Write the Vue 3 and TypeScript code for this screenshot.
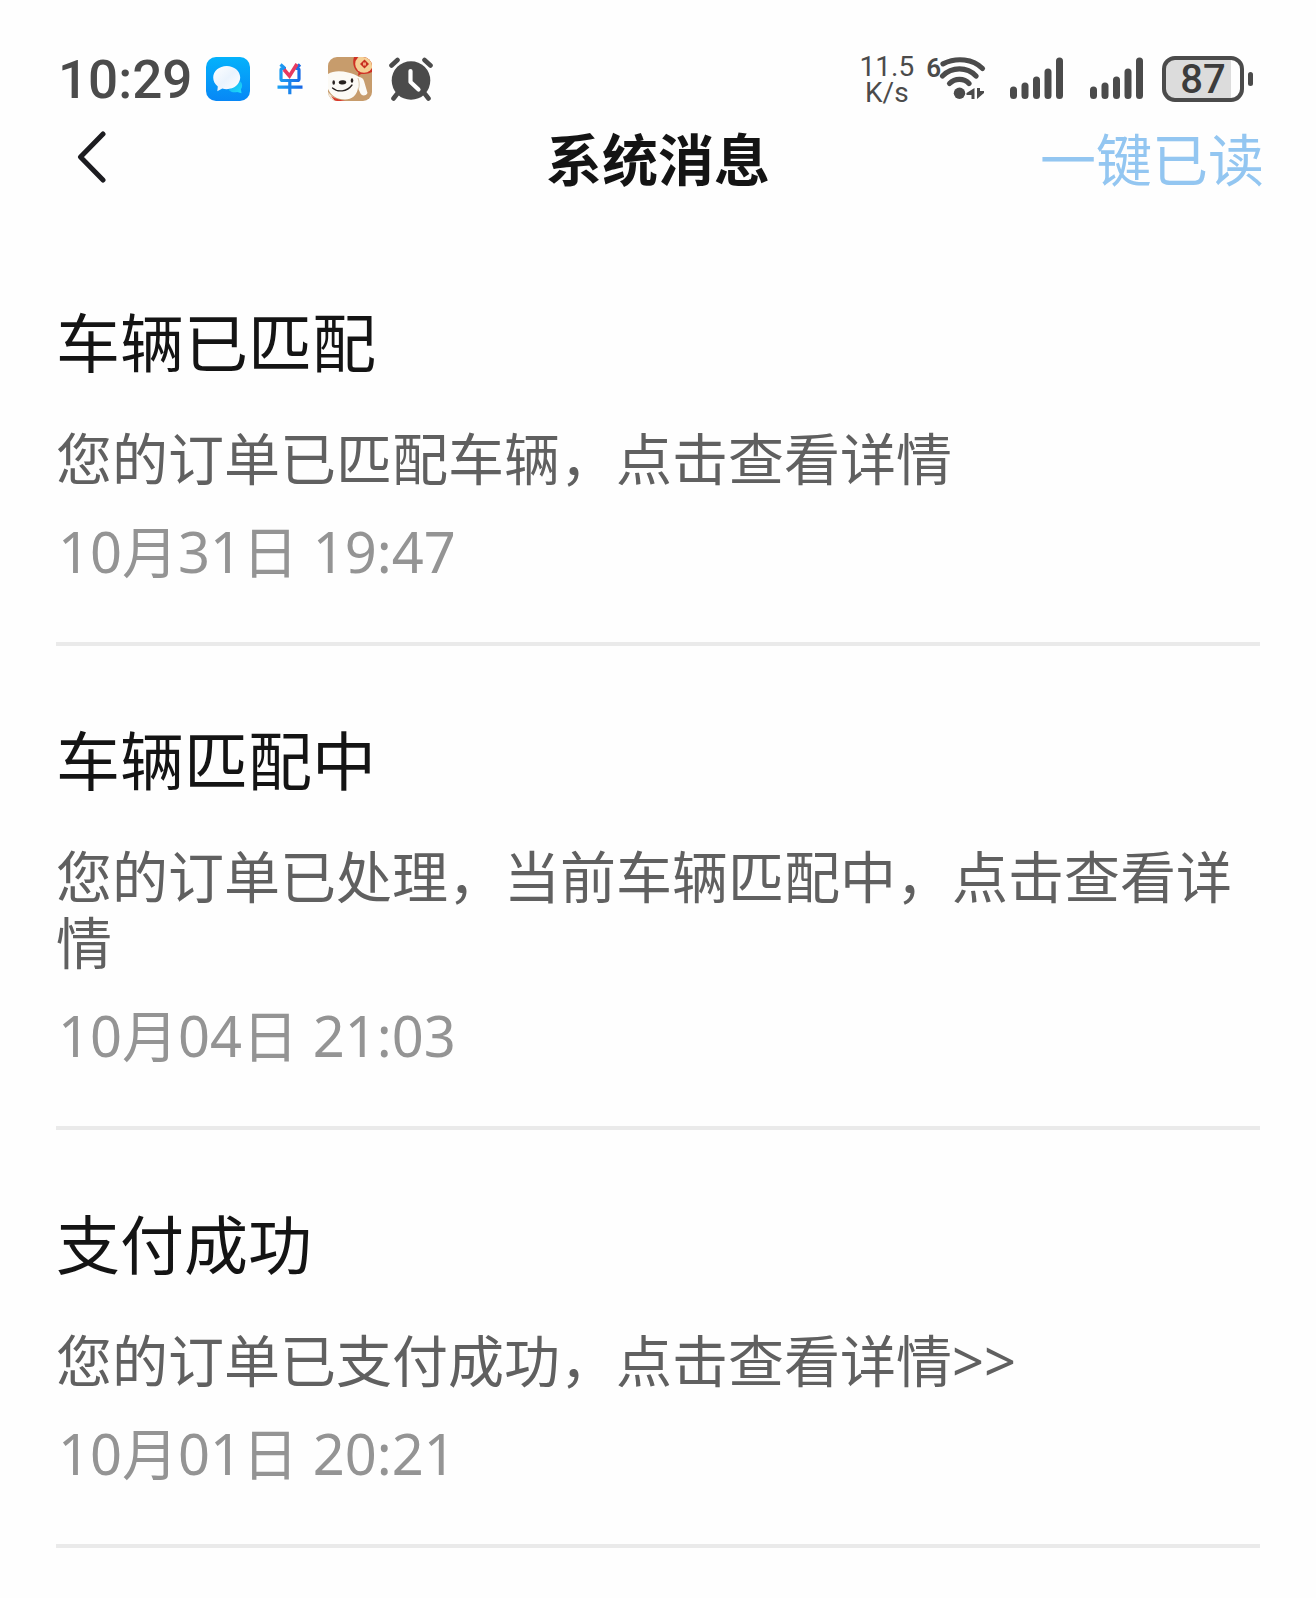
<script setup lang="ts">
interface Message {
  id: number
  title: string
  body: string
  time: string
}

const messages: Message[] = [
  { id: 1, title: '车辆已匹配', body: '您的订单已匹配车辆，点击查看详情', time: '10月31日 19:47' },
  { id: 2, title: '车辆匹配中', body: '您的订单已处理，当前车辆匹配中，点击查看详情', time: '10月04日 21:03' },
  { id: 3, title: '支付成功', body: '您的订单已支付成功，点击查看详情>>', time: '10月01日 20:21' },
]

const signals: number[] = [1, 2]
</script>

<template>
  <div class="screen">
    <div class="status">
      <div class="status-left">
        <span class="clock">10:29</span>
        <svg class="app-icon" viewBox="0 0 44 44" aria-hidden="true">
          <defs>
            <linearGradient id="chatBg" x1="0" y1="0" x2="0" y2="1">
              <stop offset="0" stop-color="#04b2fb" />
              <stop offset="1" stop-color="#0787f6" />
            </linearGradient>
            <linearGradient id="chatTail" x1="0" y1="0" x2="1" y2="1">
              <stop offset="0" stop-color="#10a8f4" />
              <stop offset="1" stop-color="#1fe0f8" />
            </linearGradient>
            <linearGradient id="chatBubble" x1="0" y1="0" x2="1" y2="1">
              <stop offset="0" stop-color="#fff" />
              <stop offset="0.5" stop-color="#eaf3fd" />
              <stop offset="1" stop-color="#fff" />
            </linearGradient>
          </defs>
          <rect width="44" height="44" rx="10" fill="url(#chatBg)" />
          <path d="M34.5 24.5c2.200 2.300 2 5.500.4 7.700l.6 4-4.200-1.300c-3.300.9-6.800.1-8.800-2.200z" fill="url(#chatTail)" />
          <path d="M20.700 9C13.200 9 7.200 14.100 7.200 20.600c0 3.600 1.700 6.600 4.600 8.800l-.5 4.900 5-2.700c1.400.4 2.900.6 4.400.6 7.500 0 13.500-5.100 13.500-11.600S28.200 9 20.700 9z" fill="url(#chatBubble)" />
        </svg>
        <svg class="app-icon" viewBox="0 0 44 44" aria-hidden="true">
          <defs>
            <linearGradient id="payFrame" gradientUnits="userSpaceOnUse" x1="10" y1="0" x2="36" y2="0">
              <stop offset="0" stop-color="#1ea4f4" />
              <stop offset="1" stop-color="#1764e4" />
            </linearGradient>
          </defs>
          <g fill="none" stroke="url(#payFrame)" stroke-width="3.200">
            <path d="M19 11.500h-3.500q-1.500 0-1.500 1.500v9q0 1.500 1.500 1.500h15q1.500 0 1.500-1.500v-9q0-1.500-1.500-1.500h-2" />
            <path d="M13.500 7.500l4 3.500M33 7.500l-3.500 3.500" />
            <path d="M10.500 30.200h25M22.800 24v13.300" />
          </g>
          <path d="M17 12.500l5.500 6.500 7.500-12" fill="none" stroke="#e73a60" stroke-width="3.600" />
        </svg>
        <svg class="app-icon" viewBox="0 0 44 44" aria-hidden="true">
          <defs>
            <clipPath id="dogClip"><rect width="44" height="44" rx="9" /></clipPath>
          </defs>
          <g clip-path="url(#dogClip)">
            <rect width="44" height="44" fill="#c79c6c" />
            <path d="M26 0h18v15c-4 2-8 2-11 2l-3 2 .5-3.500C26 13 24 6 26 0z" fill="#cf3024" />
            <circle cx="36" cy="7" r="8.800" fill="#f5cf94" />
            <path d="M36.500 2.500l4.500 4.500-4.500 4.500L32 7z" fill="#c82f20" />
            <rect x="35" y="5.500" width="3" height="3" fill="#f2a67b" />
            <path d="M0 35c5 6 11 9 18 9H0z" fill="#f1e6d4" />
            <path d="M3 39c4 2.500 9 4 15 5H7z" fill="#d93a2c" />
            <path d="M0 17c5-3.500 13-3.500 20-1.500 4 .5 8 2.500 11 4.500 2 0 4 1 5 4l3.500 12c-2 3.500-5.500 3-7 .5L30 31c-1 7-6 11.500-13 11.500C9 42.500 3 38.500 0 32z" fill="#fcfaf5" />
            <path d="M30 21c1.500 4 1.500 8 .5 11" fill="none" stroke="#d9c7ab" stroke-width="1" />
            <ellipse cx="5.700" cy="25.500" rx="1.300" ry="2.200" fill="#28221f" />
            <ellipse cx="24" cy="23.500" rx="1.300" ry="2.200" fill="#28221f" />
            <ellipse cx="14.500" cy="25.300" rx="3.800" ry="2.100" transform="rotate(-6 14.500 25.300)" fill="#28221f" />
            <path d="M4.500 31c5 4.500 14.500 4 19.500-3" fill="none" stroke="#28221f" stroke-width="1.300" stroke-linecap="round" />
          </g>
        </svg>
        <svg class="app-icon" viewBox="0 0 44 44" aria-hidden="true">
          <circle cx="22" cy="23.500" r="19.300" fill="#4b4b4b" />
          <g fill="none" stroke="#4b4b4b" stroke-width="4.600" stroke-linecap="round">
            <path d="M2.500 8.500l6-5.500M41.500 8.500l-6-5.500M8 37l-3.500 4.500M36 37l3.500 4.500" />
          </g>
          <path d="M21.500 14v11l8 7.500" fill="none" stroke="#fefefe" stroke-width="4.200" stroke-linecap="round" stroke-linejoin="round" />
        </svg>
      </div>

      <div class="status-right">
        <div class="network">
          <div class="speed">11.5<br />K/s</div>
          <div class="wifi">
            <span class="wifi-gen">6</span>
            <svg class="wifi-icon" viewBox="0 0 48 46" aria-hidden="true">
              <g fill="none" stroke="#4b4b4b" stroke-width="5.200" stroke-linecap="round">
                <path d="M4 7.800C18 1 34 3 43.500 12.500" />
                <path d="M3.500 20C13 10.500 28 10.500 37 20" />
                <path d="M10.500 27.500C16 22 25 22 30 27.500" />
              </g>
              <circle cx="20.500" cy="37.300" r="5.700" fill="#4b4b4b" />
              <path d="M35.500 32v11h-3v-4h-5v-2zM38 32h3v3h4v2l-7 6z" fill="#4b4b4b" />
            </svg>
          </div>
        </div>
        <svg v-for="s in signals" :key="s" class="signal" viewBox="0 0 54 44" aria-hidden="true">
          <g stroke="#4b4b4b" stroke-width="7" stroke-linecap="round">
            <path d="M3.500 33v5.500M15 29v9.500M26.500 23v15.500M38 15v23.500M49.500 4v34.500" />
          </g>
        </svg>
        <div class="battery">
          <div class="battery-body">87</div>
          <div class="battery-tip"></div>
        </div>
      </div>
    </div>

    <header class="nav">
      <button class="back" type="button" aria-label="返回">
        <svg viewBox="0 0 30 52" aria-hidden="true">
          <path d="M26 3L3.500 26 26 49" fill="none" stroke="#1c1c20" stroke-width="5" stroke-linecap="round" stroke-linejoin="round" />
        </svg>
      </button>
      <h1>系统消息</h1>
      <button class="read-all" type="button">一键已读</button>
    </header>

    <main class="list">
      <article v-for="m in messages" :key="m.id" class="message">
        <h2>{{ m.title }}</h2>
        <p>{{ m.body }}</p>
        <time>{{ m.time }}</time>
      </article>
    </main>
  </div>
</template>

<style>
body {
  margin: 0;
  background: #fefefe;
}
</style>

<style scoped>
.screen {
  min-height: 100vh;
  box-sizing: border-box;
  background: #fefefe;
  font-family: "Noto Sans", "Noto Sans CJK SC", sans-serif;
  color: #141414;
}

.status {
  display: flex;
  justify-content: space-between;
  align-items: center;
  height: 70px;
  padding: 44px 63px 0 58px;
  color: #4b4b4b;
  font-family: Roboto, sans-serif;
}

.status-left {
  display: flex;
  align-items: center;
  gap: 17px;
}

.clock {
  margin-right: -3px;
  padding-top: 2px;
  font-size: 53px;
  line-height: 64px;
  font-weight: 500;
}

.app-icon {
  width: 44px;
  height: 44px;
}

.status-right {
  display: flex;
  align-items: center;
  gap: 26px;
}

.network {
  display: flex;
  align-items: center;
  gap: 12px;
  margin-right: -3px;
}

.speed {
  padding-top: 2px;
  font-size: 28px;
  line-height: 26px;
  text-align: center;
}

.wifi {
  display: flex;
  align-items: flex-start;
}

.wifi-gen {
  font-size: 26px;
  line-height: 24px;
  font-weight: 600;
  margin-right: -2px;
}

.wifi-icon {
  width: 48px;
  height: 46px;
}

.signal {
  width: 54px;
  height: 44px;
}

.battery {
  display: flex;
  align-items: center;
  gap: 4px;
  margin-left: -8px;
}

.battery-body {
  box-sizing: border-box;
  width: 82px;
  height: 46px;
  border: 4px solid #4b4b4b;
  border-radius: 13px;
  background: linear-gradient(to right, #dcdcdc 88%, #fefefe 88%);
  color: #3c3c3c;
  font-size: 40px;
  line-height: 40px;
  font-weight: 500;
  text-align: center;
}

.battery-tip {
  width: 5px;
  height: 14px;
  border-radius: 3px;
  background: #4b4b4b;
}

.nav {
  display: grid;
  grid-template-columns: 1fr auto 1fr;
  align-items: center;
  height: 86px;
  padding: 0 52px;
}

.nav h1 {
  margin: 0;
  padding-top: 4px;
  font-size: 56px;
  line-height: 66px;
  font-weight: 700;
}

.nav button {
  padding: 0;
  border: 0;
  background: none;
  font-family: inherit;
  cursor: pointer;
}

.nav .back {
  justify-self: start;
  display: flex;
  padding-left: 25px;
}

.back svg {
  width: 30px;
  height: 52px;
}

.nav .read-all {
  justify-self: end;
  padding-top: 4px;
  color: #93c6f1;
  font-size: 56px;
  line-height: 66px;
}

.list {
  padding: 28px 56px 0;
}

.message {
  padding: 77px 0 58px;
  border-bottom: 4px solid #eaeaea;
}

.message h2 {
  margin: 0 0 44px;
  font-size: 64px;
  line-height: 76px;
  font-weight: 400;
}

.message p {
  margin: 0 0 27px;
  color: #606060;
  font-size: 56px;
  line-height: 66px;
}

.message time {
  display: block;
  padding-left: 2px;
  color: #949494;
  font-size: 56px;
  line-height: 66px;
}
</style>
